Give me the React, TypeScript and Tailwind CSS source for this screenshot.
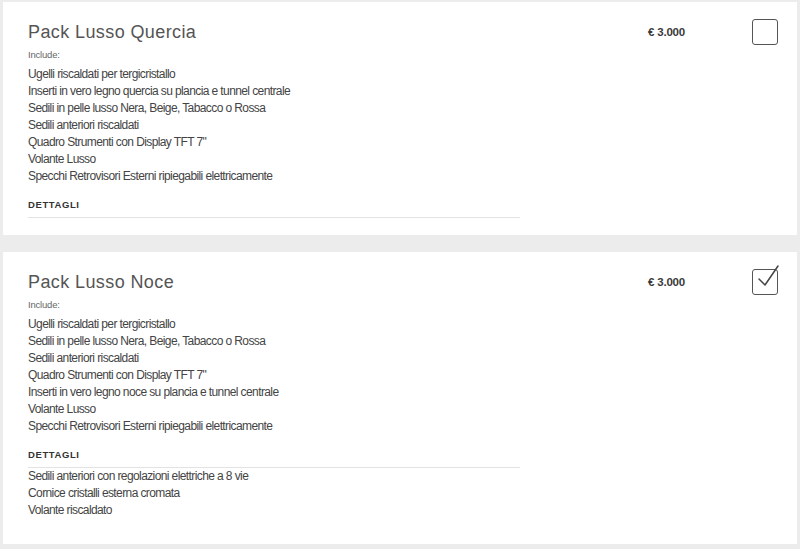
import React from "react";

type Pack = {
  title: string;
  items: string[];
  extra?: string[];
  checked: boolean;
};

const packs: Pack[] = [
  {
    title: "Pack Lusso Quercia",
    items: [
      "Ugelli riscaldati per tergicristallo",
      "Inserti in vero legno quercia su plancia e tunnel centrale",
      "Sedili in pelle lusso Nera, Beige, Tabacco o Rossa",
      "Sedili anteriori riscaldati",
      "Quadro Strumenti con Display TFT 7\"",
      "Volante Lusso",
      "Specchi Retrovisori Esterni ripiegabili elettricamente",
    ],
    checked: false,
  },
  {
    title: "Pack Lusso Noce",
    items: [
      "Ugelli riscaldati per tergicristallo",
      "Sedili in pelle lusso Nera, Beige, Tabacco o Rossa",
      "Sedili anteriori riscaldati",
      "Quadro Strumenti con Display TFT 7\"",
      "Inserti in vero legno noce su plancia e tunnel centrale",
      "Volante Lusso",
      "Specchi Retrovisori Esterni ripiegabili elettricamente",
    ],
    extra: [
      "Sedili anteriori con regolazioni elettriche a 8 vie",
      "Cornice cristalli esterna cromata",
      "Volante riscaldato",
    ],
    checked: true,
  },
];

function Checkbox({ checked }: { checked: boolean }) {
  return (
    <div className="relative w-[26px] h-[26px] rounded-[3px] border-[1.5px] border-[#555]">
      {checked && (
        <svg
          className="absolute left-[4px] top-[-6px]"
          width="24"
          height="26"
          viewBox="0 0 24 26"
          fill="none"
        >
          <path d="M2 15 L8 21 L21 2" stroke="#444" strokeWidth="1.5" strokeLinecap="round" strokeLinejoin="round" />
        </svg>
      )}
    </div>
  );
}

function Card({ pack }: { pack: Pack }) {
  return (
    <div className={`flex bg-white ${pack.extra ? "pb-[25px]" : "pb-[17px]"}`}>
      <div className="w-[645px] pl-[25px] pt-[19px]">
        <div className="text-[18px] leading-[22px] tracking-[0.4px] text-[#555]">{pack.title}</div>
        <div className="mt-[5px] text-[9.5px] leading-[14px] tracking-[-0.2px] text-[#666]">Include:</div>
        <div className="mt-[4px] text-[12px] leading-[17px] tracking-[-0.6px] text-[#444]">
          {pack.items.map((t) => (
            <div key={t}>{t}</div>
          ))}
        </div>
        <div className="mt-[13px] w-[492px] border-b border-[#e3e3e3] pb-[5px]">
          <div className="text-[9.5px] leading-[14px] font-bold tracking-[0.6px] text-[#333]">DETTAGLI</div>
        </div>
        {pack.extra && (
          <div className="text-[12px] leading-[17px] tracking-[-0.6px] text-[#444]">
            {pack.extra.map((t) => (
              <div key={t}>{t}</div>
            ))}
          </div>
        )}
      </div>
      <div className="w-[104px] pt-[23px] text-[11.5px] leading-[14px] font-bold tracking-[-0.2px] text-[#3a3a3a]">€ 3.000</div>
      <div className="pt-[17px]">
        <Checkbox checked={pack.checked} />
      </div>
    </div>
  );
}

export default function App() {
  return (
    <div
      className="h-[549px] w-[800px] bg-[#ececec] pt-[2px] px-[3px] flex flex-col gap-[17px] overflow-hidden"
      style={{ fontFamily: '"Liberation Sans", Arial, sans-serif' }}
    >
      {packs.map((p) => (
        <Card key={p.title} pack={p} />
      ))}
    </div>
  );
}
